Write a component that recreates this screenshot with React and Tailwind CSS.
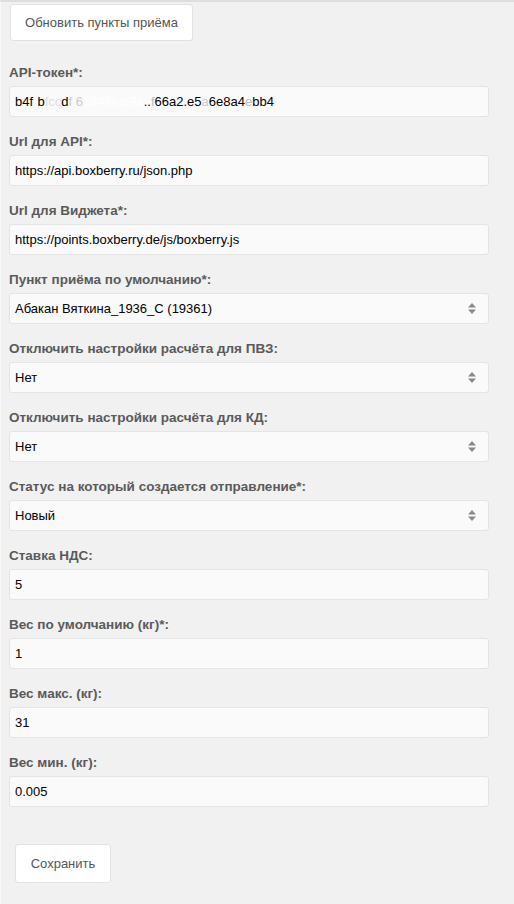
import React, { useState } from 'react';

const fields = [
  { label: 'API-токен*:', type: 'token' },
  { label: 'Url для API*:', value: 'https://api.boxberry.ru/json.php' },
  { label: 'Url для Виджета*:', value: 'https://points.boxberry.de/js/boxberry.js' },
  { label: 'Пункт приёма по умолчанию*:', value: 'Абакан Вяткина_1936_С (19361)', select: true },
  { label: 'Отключить настройки расчёта для ПВЗ:', value: 'Нет', select: true },
  { label: 'Отключить настройки расчёта для КД:', value: 'Нет', select: true },
  { label: 'Статус на который создается отправление*:', value: 'Новый', select: true },
  { label: 'Ставка НДС:', value: '5' },
  { label: 'Вес по умолчанию (кг)*:', value: '1' },
  { label: 'Вес макс. (кг):', value: '31' },
  { label: 'Вес мин. (кг):', value: '0.005' },
];

function Arrows() {
  return (
    <svg width="8" height="11" viewBox="0 0 8 11" className="shrink-0">
      <polygon points="4,0 8,4.5 0,4.5" fill="#8a8a8a" />
      <polygon points="0,6.5 8,6.5 4,11" fill="#8a8a8a" />
    </svg>
  );
}

function Field({ field }) {
  const [value, setValue] = useState(field.value || '');

  return (
    <div className="mb-[15px]">
      <div className="text-[13.5px] leading-[20px] font-bold text-[#5a5a5a] mb-[3px]">{field.label}</div>
      <div className="w-[480px] h-[31px] flex items-center bg-[#fafafa] border border-[#e4e4e4] rounded-[3px] pl-[5px] pr-[12px] text-[13px] text-black">
        {field.type === 'token' ? (
          <div className="flex-1 whitespace-nowrap overflow-hidden">
            <span>b4f</span>
            <span className="text-white">·</span>
            <span>b</span>
            <span className="text-[#ddd]">fcc</span>
            <span>d</span>
            <span className="text-[#ccc]">f 6</span>
            <span className="text-white">1d4f8ce9a</span>
            <span>..</span>
            <span className="text-[#bbb]">f</span>
            <span>66a2.e5</span>
            <span className="text-[#ccc]">a</span>
            <span>6e8a4</span>
            <span className="text-[#bbb]">e</span>
            <span>bb4</span>
          </div>
        ) : field.select ? (
          <>
            <div className="flex-1 whitespace-nowrap">{value}</div>
            <Arrows />
          </>
        ) : (
          <input
            value={value}
            onChange={(e) => setValue(e.target.value)}
            className="flex-1 bg-transparent outline-none text-[13px] text-black"
          />
        )}
      </div>
    </div>
  );
}

export default function App() {
  return (
    <div
      className="w-[514px] h-[904px] bg-[#f1f1f1] border-t-2 border-[#dedede] border-l border-l-[#f7f7f7] overflow-hidden"
      style={{ fontFamily: '"Liberation Sans", Arial, sans-serif' }}
    >
      <div className="pl-[8px] pt-[2px]">
        <button className="ml-[1px] w-[183px] h-[37px] bg-white border border-[#e2e2e2] rounded-[3px] text-[13px] text-[#555]">
          Обновить пункты приёма
        </button>

        <div className="mt-[22px]">
          {fields.map((f) => (
            <Field key={f.label} field={f} />
          ))}
        </div>

        <button className="ml-[6px] mt-[22px] w-[96px] h-[39px] bg-white border border-[#e2e2e2] rounded-[3px] text-[13px] text-[#555]">
          Сохранить
        </button>
      </div>
    </div>
  );
}
